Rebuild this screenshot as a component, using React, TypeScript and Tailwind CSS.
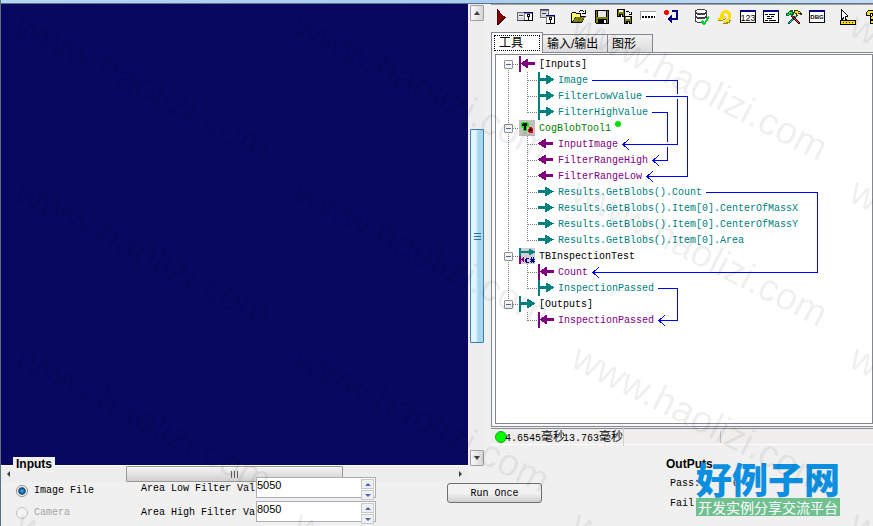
import React, { useState } from "react";

const PURPLE = "#800080";
const TEAL = "#008080";

type TreeRow = {
  label: string;
  kind: "inputs" | "outputs" | "blob" | "script" | "in" | "out" | "inBar" | "outBar";
  level: number;
};

const treeRows: TreeRow[] = [
  { label: "[Inputs]", kind: "inputs", level: 0 },
  { label: "Image", kind: "outBar", level: 1 },
  { label: "FilterLowValue", kind: "outBar", level: 1 },
  { label: "FilterHighValue", kind: "outBar", level: 1 },
  { label: "CogBlobTool1", kind: "blob", level: 0 },
  { label: "InputImage", kind: "in", level: 1 },
  { label: "FilterRangeHigh", kind: "in", level: 1 },
  { label: "FilterRangeLow", kind: "in", level: 1 },
  { label: "Results.GetBlobs().Count", kind: "out", level: 1 },
  { label: "Results.GetBlobs().Item[0].CenterOfMassX", kind: "out", level: 1 },
  { label: "Results.GetBlobs().Item[0].CenterOfMassY", kind: "out", level: 1 },
  { label: "Results.GetBlobs().Item[0].Area", kind: "out", level: 1 },
  { label: "TBInspectionTest", kind: "script", level: 0 },
  { label: "Count", kind: "inBar", level: 1 },
  { label: "InspectionPassed", kind: "outBar", level: 1 },
  { label: "[Outputs]", kind: "outputs", level: 0 },
  { label: "InspectionPassed", kind: "inBar", level: 1 },
];

const Icon = ({ children }: { children: React.ReactNode }) => (
  <svg width="16" height="16" viewBox="0 0 16 16" shapeRendering="crispEdges" aria-hidden="true">
    {children}
  </svg>
);

const KeyWindow = ({ x, y }: { x: number; y: number }) => (
  <g transform={`translate(${x} ${y})`}>
    <path d="M0 0h9v9H0z" fill="#000" />
    <path d="M0 0h8v8H0z" fill="#808080" />
    <path d="M1 2h7v6H1z" fill="#fff" />
    <path d="M0 0h9v1H0z" fill="#000080" />
    <path d="M3 2h3v3H5v3H4V5H3z" fill="#000" />
    <path d="M4 3h1v1H4z" fill="#fff" />
  </g>
);

const Disk = ({ x, y }: { x: number; y: number }) => (
  <g transform={`translate(${x} ${y})`}>
    <path d="M0 0h8v8H0z" fill="#000" />
    <path d="M1 1h6v6H1z" fill="#808000" />
    <path d="M2 1h4v2H2z" fill="#f0f0f0" />
    <path d="M2 5h4v3H2z" fill="#000" />
    <path d="M4 6h1v2H4z" fill="#fff" />
  </g>
);

const toolGroups = [
  [
    {
      name: "Run",
      icon: (
        <Icon>
          <path d="M3 0h1v1h1v1h1v2h1v1h1v1h1v1h2v2h-1v1H9v1H8v1H7v1H6v1H5v1H4v1H3z" fill="#800000" />
          <path d="M3 0h1v16H3z" fill="#400000" />
          <path d="M11 8h1v1h-1v1h-1v1H9v1H8v1H7v1H6v1H5v1H4v-1h1v-1h1v-1h1v-1h1v-1h1v-1h1V9h1z" fill="#200000" />
        </Icon>
      ),
    },
    {
      name: "Local display",
      icon: (
        <Icon>
          <path d="M0 3h8v9H0z" fill="#707070" />
          <path d="M1 4h7v7H1z" fill="#d8d8d8" />
          <path d="M2 6h4v1H2zM0 11h8v1H0z" fill="#404060" />
          <path d="M2 7h4v1H2z" fill="#fff" />
          <KeyWindow x={7} y={3} />
        </Icon>
      ),
    },
    {
      name: "Floating display",
      icon: (
        <Icon>
          <path d="M0 0h9v9H0z" fill="#707070" />
          <path d="M1 2h7v6H1z" fill="#d8d8d8" />
          <path d="M0 0h9v1H0z" fill="#404080" />
          <path d="M2 4h4v1H2z" fill="#404060" />
          <KeyWindow x={6} y={6} />
        </Icon>
      ),
    },
  ],
  [
    {
      name: "Open",
      icon: (
        <Icon>
          <path d="M0 4h1V3h4v1h5v3h5v1h-1v1h-1v2h-1v2h-1v1H0z" fill="#000" />
          <path d="M1 4h4v1h4v3H4v1H3v2H2v1H1z" fill="#ff6" />
          <path d="M5 8h9v1h-1v1h-1v2h-1v1H2v-1h1v-2h1V9h1z" fill="#808000" />
          <path d="M9 1h3v1H9zM12 2h1v1h-1zM14 1h1v4h-4V4h3zM8 2h1v1H8z" fill="#000" />
        </Icon>
      ),
    },
    {
      name: "Save",
      icon: (
        <Icon>
          <path d="M1 1h14v14H2v-1H1z" fill="#000" />
          <path d="M2 2h12v12H2z" fill="#808000" />
          <path d="M4 2h8v6H4z" fill="#e8e8e8" />
          <path d="M3 8h1V2H3zM12 2h1v6h-1zM4 10h9v5H4z" fill="#000" />
          <path d="M10 11h2v3h-2z" fill="#fff" />
        </Icon>
      ),
    },
    {
      name: "Save as",
      icon: (
        <Icon>
          <Disk x={0} y={0} />
          <Disk x={7} y={7} />
          <path d="M9 2h3v1H9zM12 3h1v1h-1zM14 3h1v3h-3V5h2z" fill="#000" />
        </Icon>
      ),
    },
    {
      name: "Comment",
      icon: (
        <Icon>
          <path d="M0 2h16v10H0z" fill="#fff" />
          <path d="M0 2h16v1H0zM0 3h1v8H0z" fill="#a0a0a0" />
          <path d="M2 7h2v2H2zM5 7h2v2H5zM8 7h2v2H8zM11 7h2v2h-2zM14 7h1v2h-1z" fill="#000" />
        </Icon>
      ),
    },
    {
      name: "Reset",
      icon: (
        <Icon>
          <path d="M1 2h1V1h3v1h1v3H5v1H2V5H1z" fill="#f00" />
          <path d="M9 1h6v10H9v3H8v-1H7v-1H6v-1H5V9h1V8h1V7h1V6h1v3h4V3H9z" fill="#000080" />
        </Icon>
      ),
    },
  ],
  [
    {
      name: "Database",
      icon: (
        <Icon>
          <path d="M3 0h8v1h2v12h-2v1H3v-1H1V1h2z" fill="#404040" />
          <path d="M3 1h8v1h1v1h-1v1H3V3H2V2h1zM2 5h1v1h8V5h1v2h-1v1H3V7H2zM2 9h1v1h8V9h1v2h-1v2H3v-1H2z" fill="#fff" />
          <path d="M14 7h1v3h-1v2h-1v1h-1v2h-1v1H9v-1H8v-1H7v-2h1v-1h1v1h1v1h1v-2h1V9h1V8h1z" fill="#0c3" />
        </Icon>
      ),
    },
    {
      name: "Undo",
      icon: (
        <Icon>
          <path d="M7 1h4v1h2v2h1v6h-1v2h-2v2H8v1H6v-3h3v-2h2V5H9V4H7v3h2v1H8v1H7v1H5v1H0v-1h1V9h1V8h1V5h1V3h1V2h2z" fill="#ffe000" />
          <path d="M1 11h5v-1h2V9h1v1H8v1H6v1H1zM6 14h3v-1h3v-2h2v1h-1v2h-2v1H6z" fill="#9a8a20" />
        </Icon>
      ),
    },
    {
      name: "Numbers",
      icon: (
        <Icon>
          <path d="M0 1h16v13H0z" fill="#000" />
          <path d="M1 3h14v10H1z" fill="#fff" />
          <path d="M0 1h16v2H0z" fill="#000080" />
          <text x="8" y="12" textAnchor="middle" fontSize="9" fontFamily="Liberation Sans, sans-serif" fill="#000">
            123
          </text>
        </Icon>
      ),
    },
    {
      name: "Properties",
      icon: (
        <Icon>
          <path d="M0 1h16v13H0z" fill="#000" />
          <path d="M1 3h14v10H1z" fill="#fff" />
          <path d="M0 1h16v2H0z" fill="#000080" />
          <path d="M2 5h3v1H2zM6 5h6v1H6zM4 7h3v1H4zM8 7h3v1H8zM4 9h5v1H4zM2 11h3v1H2zM6 11h7v1H6z" fill="#000" />
        </Icon>
      ),
    },
    {
      name: "Tools",
      icon: (
        <Icon>
          {/* crossed handles */}
          <path d="M10 6h2v1h-1v1h-1v1H9v1H8v1H7v1H6v1H5v1H4v1H2v-2h1v-1h1v-1h1v-1h1V9h1V8h1V7h2z" fill="#004040" />
          <path d="M9 7h1v1H9v1H8v1H7v1H6v1H5v1H4v1H3v-1h1v-1h1v-1h1v-1h1V9h1V8h1z" fill="#0dd" />
          <path d="M5 6h2v1h1v1h1v1h1v1h1v1h1v1h1v1h1v2h-2v-1h-1v-1h-1v-1H9v-1H8v-1H7V9H6V8H5z" fill="#400" />
          <path d="M6 7h1v1h1v1h1v1h1v1h1v1h1v1h1v1h-1v-1h-1v-1h-1v-1H9v-1H8V9H7V8H6z" fill="#f22" />
          {/* hammer and wrench heads */}
          <path d="M0 4h2V3h1V2h1V1h3v2h1v3H7v1H5V6H3v1H0z" fill="#063" />
          <path d="M1 5h2V3h3v2H5V4H4v1H3v1H1z" fill="#1e3" />
          <path d="M8 1h4v1h2v1h1v1h1v2h-2V5h-2v2h-2V5H9V4H8z" fill="#330" />
          <path d="M9 2h3v1h2v1h-2v2h-1V4H9z" fill="#ffe000" />
        </Icon>
      ),
    },
    {
      name: "Debug",
      icon: (
        <Icon>
          <path d="M0 1h16v13H0z" fill="#000" />
          <path d="M1 3h14v10H1z" fill="#fff" />
          <path d="M0 1h16v2H0z" fill="#000080" />
          <text x="8" y="10" textAnchor="middle" fontSize="6" fontWeight="bold" fontFamily="Liberation Sans, sans-serif" fill="#000">
            DBG
          </text>
        </Icon>
      ),
    },
  ],
  [
    {
      name: "Pointer",
      icon: (
        <Icon>
          <path d="M1 0h1v1h1v1h1v1h1v1h1v1h1v1h1v2H6v2h1v2H5V9H4v1H3v1H1z" fill="#000" />
          <path d="M2 2h1v1h1v1h1v1h1v1h1v1H5v3H4V8H3v1H2z" fill="#fff" />
          <path d="M0 11h16v5H0z" fill="#000" />
          <path d="M1 12h14v3H1z" fill="#ffe000" />
          <path d="M3 13h1v1H3zM6 13h1v1H6zM9 13h1v1H9zM12 13h1v1h-1z" fill="#000" />
        </Icon>
      ),
    },
    {
      name: "Help",
      icon: (
        <Icon>
          <path d="M5 1h8v1h1v5h-1v1h-2v3H7V7h2V5H8v2H3V3h1V2h1z" fill="#000" />
          <path d="M5 2h7v1h1v3h-1v1h-2v3H8V8h1V7h1V4H7v2H4V3h1z" fill="#ffe000" />
          <path d="M7 11h4v4H7z" fill="#000" />
          <path d="M8 12h2v2H8z" fill="#ffe000" />
        </Icon>
      ),
    },
  ],
];

const ARROW_RIGHT = "M0 6h7V3h2v1h2v1h1v1h2v1h2v1h-2v1h-2v1h-1v1H9v1H7V9H0z";
const ARROW_LEFT = "M15 6H8V3H6v1H4v1H3v1H1v1H0v1h1v1h2v1h1v1h2v1h2V9h7z";

const NodeIcon = ({ kind }: { kind: TreeRow["kind"] }) => {
  if (kind === "in") {
    return (
      <Icon>
        <path d={ARROW_LEFT} fill={PURPLE} />
      </Icon>
    );
  }
  if (kind === "out") {
    return (
      <Icon>
        <path d={ARROW_RIGHT} fill={TEAL} />
      </Icon>
    );
  }
  if (kind === "inputs" || kind === "inBar") {
    return (
      <Icon>
        <path d="M0 0h2v16H0z" fill={PURPLE} />
        <path d="M16 6H9V3H7v1H6v1H4v1H3v1H2v1h1v1h1v1h2v1h1v1h2V9h7z" fill={PURPLE} />
      </Icon>
    );
  }
  if (kind === "outputs" || kind === "outBar") {
    return (
      <Icon>
        <path d="M0 0h2v16H0z" fill={TEAL} />
        <path d="M2 6h6V3h2v1h2v1h1v1h2v1h1v1h-1v1h-2v1h-1v1h-2v1H8V9H2z" fill={TEAL} />
      </Icon>
    );
  }
  if (kind === "blob") {
    return (
      <Icon>
        <path d="M0 0h16v16H0z" fill="#c0c0c0" />
        <path d="M3 2h6v1h1v4H8v4H4V8H3V7H2V3h1z" fill="#0e0" />
        <path d="M4 3h4v3H7v4H5V6H3V4h1z" fill="#000" />
        <path d="M10 7h3v1h1v5h-4v-1H9V9h1z" fill="#f00" />
        <path d="M11 8h1v1h1v2h-2v1h-1V9h1z" fill="#200" />
      </Icon>
    );
  }
  return (
    <Icon>
      <path d="M0 0h16v16H0z" fill="#d0d0d0" />
      <path d="M0 0h2v8H0z" fill={TEAL} />
      <path d="M2 3h8V1h2v1h2v1h2v2h-2v1h-2v1h-2V5H2z" fill={TEAL} />
      <path d="M0 8h2v8H0zM2 11h1v-1h1V9h1v5H4v-1H3v-1H2z" fill={PURPLE} />
      <path d="M7 10h3v1H8v3h2v1H7v-1H6v-3h1zM11 11h1V9h1v2h1V9h1v2h1v1h-1v1h1v1h-1v1h-1v-1h-1v1h-1v-1h-1v-1h1v-1h-1z" fill="#000080" />
    </Icon>
  );
};

const labelColor = (row: TreeRow) => {
  if (row.kind === "blob") return "text-[#008000]";
  if (row.level === 0) return "text-black";
  return row.kind === "in" || row.kind === "inBar" ? "text-[#800080]" : "text-[#008080]";
};

const ToolTree = () => (
  <div className="relative flex-1 overflow-hidden border border-[#828790] bg-white pt-px">
    {/* branch lines and links between terminals */}
    <svg className="pointer-events-none absolute left-0 top-px" width="340" height="280" shapeRendering="crispEdges" fill="none" aria-hidden="true">
      <g stroke="#808080" strokeDasharray="1 1">
        <path d="M12.5 12V248M17 8.500H23M17 72.500H23M17 200.500H23M17 248.500H23" />
        <path d="M31.500 16V57M31.500 80V185M31.500 208V233M31.500 256V265" />
        <path d="M32 24.500H42M32 40.500H42M32 56.500H42M32 88.500H42M32 104.500H42M32 120.500H42M32 136.500H42M32 152.500H42M32 168.500H42M32 184.500H42M32 216.500H42M32 232.500H42M32 264.500H42" />
      </g>
      <g stroke="#0000ff">
        <path d="M96 24.500H181.500V38M181.500 43V88.500H127" />
        <path d="M150 40.500H191.500V120.500H151" />
        <path d="M156 56.500H171.500V86M171.500 91V104.500H157" />
        <path d="M210 136.500H321.500V216.500H97" />
        <path d="M162 232.500H181.500V264.500H163" />
        <path d="M133 83l-6 5.500l6 5.500M163 99l-6 5.500l6 5.500M157 115l-6 5.500l6 5.500M103 211l-6 5.500l6 5.500M169 259l-6 5.500l6 5.500" />
      </g>
    </svg>
    <ul>
      {treeRows.map((row, index) => (
        <li key={index} className={`relative flex h-4 items-center ${row.level === 0 ? "pl-2" : "pl-[42px]"}`}>
          {row.level === 0 && (
            <button
              type="button"
              aria-label={`Collapse ${row.label}`}
              className="mr-1.5 flex size-[9px] items-center justify-center rounded-[1px] border border-[#919191] bg-[#f4f4f4]"
            >
              <span className="h-px w-[5px] bg-[#4b63a7]" />
            </button>
          )}
          <NodeIcon kind={row.kind} />
          <span className={`ml-1 whitespace-pre pt-0.5 leading-4 ${labelColor(row)}`}>{row.label}</span>
          {row.kind === "blob" && <span className="mb-2 ml-1 size-1.5 rounded-full bg-[#00e000]" />}
        </li>
      ))}
    </ul>
  </div>
);

const Chevron = ({ points, color = "#404040" }: { points: string; color?: string }) => (
  <svg width="8" height="8" viewBox="0 0 8 8" aria-hidden="true">
    <polygon points={points} fill={color} />
  </svg>
);

const UP = "1,6 4,2 7,6";
const DOWN = "1,2 7,2 4,6";

const ImageView = () => (
  <div className="flex min-w-0 flex-[483] flex-col">
    <div className="flex flex-1">
      <div className="flex-1 border-b border-white bg-[#080860]" />
      <div className="ml-0.5 flex w-[14px] flex-col bg-[#ededed] pt-px">
        <button type="button" aria-label="Scroll up" className="flex h-4 items-center justify-center rounded-[1px] border border-[#a0a0a0] bg-linear-to-r from-[#fafafa] to-[#d5d5d5]">
          <Chevron points={UP} />
        </button>
        <div className="flex-[109]" />
        <div className="flex flex-[213] flex-col items-center justify-center gap-0.5 rounded-[1px] border border-[#3c7fb1] bg-linear-to-r from-[#e3f4fc] from-40% to-[#a5d7f0] to-60%">
          <span className="h-px w-[7px] bg-[#31708f]" />
          <span className="h-px w-[7px] bg-[#31708f]" />
          <span className="h-px w-[7px] bg-[#31708f]" />
        </div>
        <div className="flex-[107]" />
        <button type="button" aria-label="Scroll down" className="flex h-4 items-center justify-center rounded-[1px] border border-[#a0a0a0] bg-linear-to-r from-[#fafafa] to-[#d5d5d5]">
          <Chevron points={DOWN} />
        </button>
      </div>
    </div>
    <div className="mr-4 flex h-4 items-center bg-[#ededed]">
      <button type="button" aria-label="Scroll left" className="flex w-4 justify-center">
        <Chevron points="2,4 5,1 5,7" />
      </button>
      <div className="flex-[109]" />
      <div className="flex h-4 flex-[215] items-center justify-center gap-0.5 rounded-[1px] border border-[#979797] bg-linear-to-b from-[#f5f5f5] to-[#d0d0d0]">
        <span className="h-[7px] w-px bg-[#606060]" />
        <span className="h-[7px] w-px bg-[#606060]" />
        <span className="h-[7px] w-px bg-[#606060]" />
      </div>
      <div className="flex-[109]" />
      <button type="button" aria-label="Scroll right" className="flex w-4 justify-center">
        <Chevron points="6,4 3,1 3,7" />
      </button>
    </div>
  </div>
);

const tabs = [
  { name: "工具", width: "w-[52px]" },
  { name: "输入/输出", width: "w-[65px]" },
  { name: "图形", width: "w-[45px]" },
];

const ToolPanel = () => {
  const [activeTab, setActiveTab] = useState("工具");

  return (
    <div className="flex min-w-0 flex-[382] flex-col border-t border-[#a0a0a0] pb-[37px]">
      <div className="flex h-[27px] items-start gap-[15px] overflow-hidden pl-[3px] pt-1">
        {toolGroups.map((group, index) => (
          <div key={index} className="flex shrink-0 gap-[7px]">
            {group.map((tool) => (
              <button key={tool.name} type="button" aria-label={tool.name} className="size-4">
                {tool.icon}
              </button>
            ))}
          </div>
        ))}
      </div>
      <div role="tablist" className="relative z-10 -mb-px flex items-end font-['Liberation_Sans','Noto_Sans_CJK_SC',sans-serif] text-xs">
        {tabs.map((tab) => (
          <button
            key={tab.name}
            type="button"
            role="tab"
            aria-selected={activeTab === tab.name}
            onClick={() => setActiveTab(tab.name)}
            className={`whitespace-nowrap border-[#828790] text-left ${tab.width} ${
              activeTab === tab.name
                ? "h-[21px] border border-b-0 bg-white p-0.5"
                : "h-[19px] border border-l-0 bg-linear-to-b from-[#f2f2f2] to-[#dcdcdc] pl-1 leading-4"
            }`}
          >
            <span className={activeTab === tab.name ? "block border border-dotted border-black pl-1 leading-[14px]" : ""}>
              {tab.name}
            </span>
          </button>
        ))}
      </div>
      <div className="flex flex-1 flex-col border-y border-l border-[#828790] bg-[#fafafa] pb-0.5 pl-[3px] pt-px">
        <ToolTree />
      </div>
      <div className="mt-px flex h-[17px] items-center border-b border-t border-b-white border-t-[#828790] bg-[#f0eded] pl-1">
        <span className="size-3 rounded-full border border-[#20a020] bg-[#00ff00]" />
        <span className="-ml-0.5 w-[58px] whitespace-nowrap pt-0.5">
          4.6545<span className="font-['Noto_Sans_CJK_SC',sans-serif] text-xs leading-[14px]">毫秒</span>
        </span>
        <span className="whitespace-nowrap border-r border-[#d0d0d0] pt-0.5">
          13.763<span className="font-['Noto_Sans_CJK_SC',sans-serif] text-xs leading-[14px]">毫秒</span>
        </span>
        <span className="ml-24 h-3 w-px bg-[#c0c0c0]" />
      </div>
    </div>
  );
};

const FilterField = ({ id, label, initial }: { id: string; label: string; initial: number }) => {
  const [value, setValue] = useState(initial);

  return (
    <div className="flex h-[21px] items-center">
      <label htmlFor={id} className="w-[115px] whitespace-nowrap pt-0.5">
        {label}
      </label>
      <div className="flex h-[21px] w-[120px] border border-[#abadb3] bg-white">
        <input
          id={id}
          type="text"
          value={value}
          onChange={(e) => setValue(Number(e.target.value) || 0)}
          className="h-[15px] min-w-0 flex-1 bg-transparent font-['Liberation_Sans',sans-serif] text-[11px] outline-none"
        />
        <div className="flex w-[14px] flex-col gap-px py-px pr-px">
          <button type="button" aria-label={`Increase ${label}`} onClick={() => setValue(value + 1)} className="flex flex-1 items-center justify-center border border-[#c8c8c8] bg-[#f0f0f0]">
            <Chevron points="1,6 4,3 7,6" color="#4b63b0" />
          </button>
          <button type="button" aria-label={`Decrease ${label}`} onClick={() => setValue(value - 1)} className="flex flex-1 items-center justify-center border border-[#c8c8c8] bg-[#f0f0f0]">
            <Chevron points="1,3 7,3 4,6" color="#4b63b0" />
          </button>
        </div>
      </div>
    </div>
  );
};

const RADIO =
  "size-3 appearance-none rounded-full border border-[#8e8f8f] bg-[#f4f4f4] checked:bg-radial checked:from-[#2a9fe0] checked:from-15% checked:via-[#0b3c66] checked:via-45% checked:to-[#f4f4f4] checked:to-60% disabled:border-[#c4c4c4]";

const Footer = () => {
  const [source, setSource] = useState("file");

  return (
    <div className="relative z-10 -mt-[25px] flex h-[69px]">
      <fieldset className="pl-[15px]">
        <legend className="-ml-[3px] h-[15px] bg-[#f0f0f0] px-[3px] font-['Liberation_Sans',sans-serif] text-xs font-bold leading-[15px]">
          Inputs
        </legend>
        <div className="mt-[5px] flex">
          <div className="flex w-[125px] flex-col gap-px pt-[3px]">
            <label className="flex h-[21px] items-center gap-1.5">
              <input type="radio" name="source" className={RADIO} checked={source === "file"} onChange={() => setSource("file")} />
              Image File
            </label>
            <label className="flex h-[21px] items-center gap-1.5 text-[#a5a5a5]">
              <input type="radio" name="source" className={RADIO} disabled checked={source === "camera"} onChange={() => setSource("camera")} />
              Camera
            </label>
          </div>
          <div className="flex flex-col gap-[3px]">
            <FilterField id="low" label="Area Low Filter Val" initial={5050} />
            <FilterField id="high" label="Area High Filter Va" initial={8050} />
          </div>
        </div>
      </fieldset>
      <button type="button" className="ml-[71px] mt-[26px] h-5 w-[95px] rounded-[3px] border border-[#707070] bg-linear-to-b from-[#f2f2f2] from-50% to-[#cfcfcf]">
        Run Once
      </button>
      <div className="relative ml-[124px]">
        <h2 className="font-['Liberation_Sans',sans-serif] text-xs font-bold leading-[14px]">OutPuts</h2>
        <dl className="mt-[3px] grid grid-cols-[63px_auto] pl-1 leading-5">
          <dt>Pass:</dt>
          <dd>0</dd>
          <dt>Fail:</dt>
          <dd>0</dd>
        </dl>
        {/* site badge sits over the counters */}
        <div className="absolute left-[30px] top-px w-[144px] whitespace-nowrap text-center font-['Noto_Sans_CJK_SC',sans-serif]">
          <div className="text-4xl font-black leading-10 text-[#0c8fe0]">好例子网</div>
          <div className="bg-[#70c090] text-sm leading-[18px] text-white">开发实例分享交流平台</div>
        </div>
      </div>
    </div>
  );
};

const Watermark = () => (
  <svg className="pointer-events-none absolute inset-0 z-20 size-full" aria-hidden="true">
    {[0, 1, 2, 3].map((row) =>
      [0, 1, 2, 3].map((col) => (
        <text
          key={`${row}-${col}`}
          transform={`translate(${12 + col * 278} ${34 + row * 166}) rotate(27)`}
          fontSize="38"
          fontFamily="Liberation Sans, sans-serif"
          fill="#000"
          fillOpacity="0.07"
        >
          www.haolizi.com
        </text>
      ))
    )}
  </svg>
);

const App = () => {
  return (
    <div className="relative flex min-h-screen flex-col overflow-hidden border-l border-[#5f6f80] bg-[#f0f0f0] font-['Liberation_Mono',monospace] text-[10px] text-black">
      <div className="h-1 border-b border-[#5f7080] bg-linear-to-r from-[#b5d5f5] via-[#a8cdf0] to-[#c5dcf5]" />
      <div className="flex flex-1 gap-[7px]">
        <ImageView />
        <ToolPanel />
      </div>
      <Footer />
      <Watermark />
    </div>
  );
};

export default App;
